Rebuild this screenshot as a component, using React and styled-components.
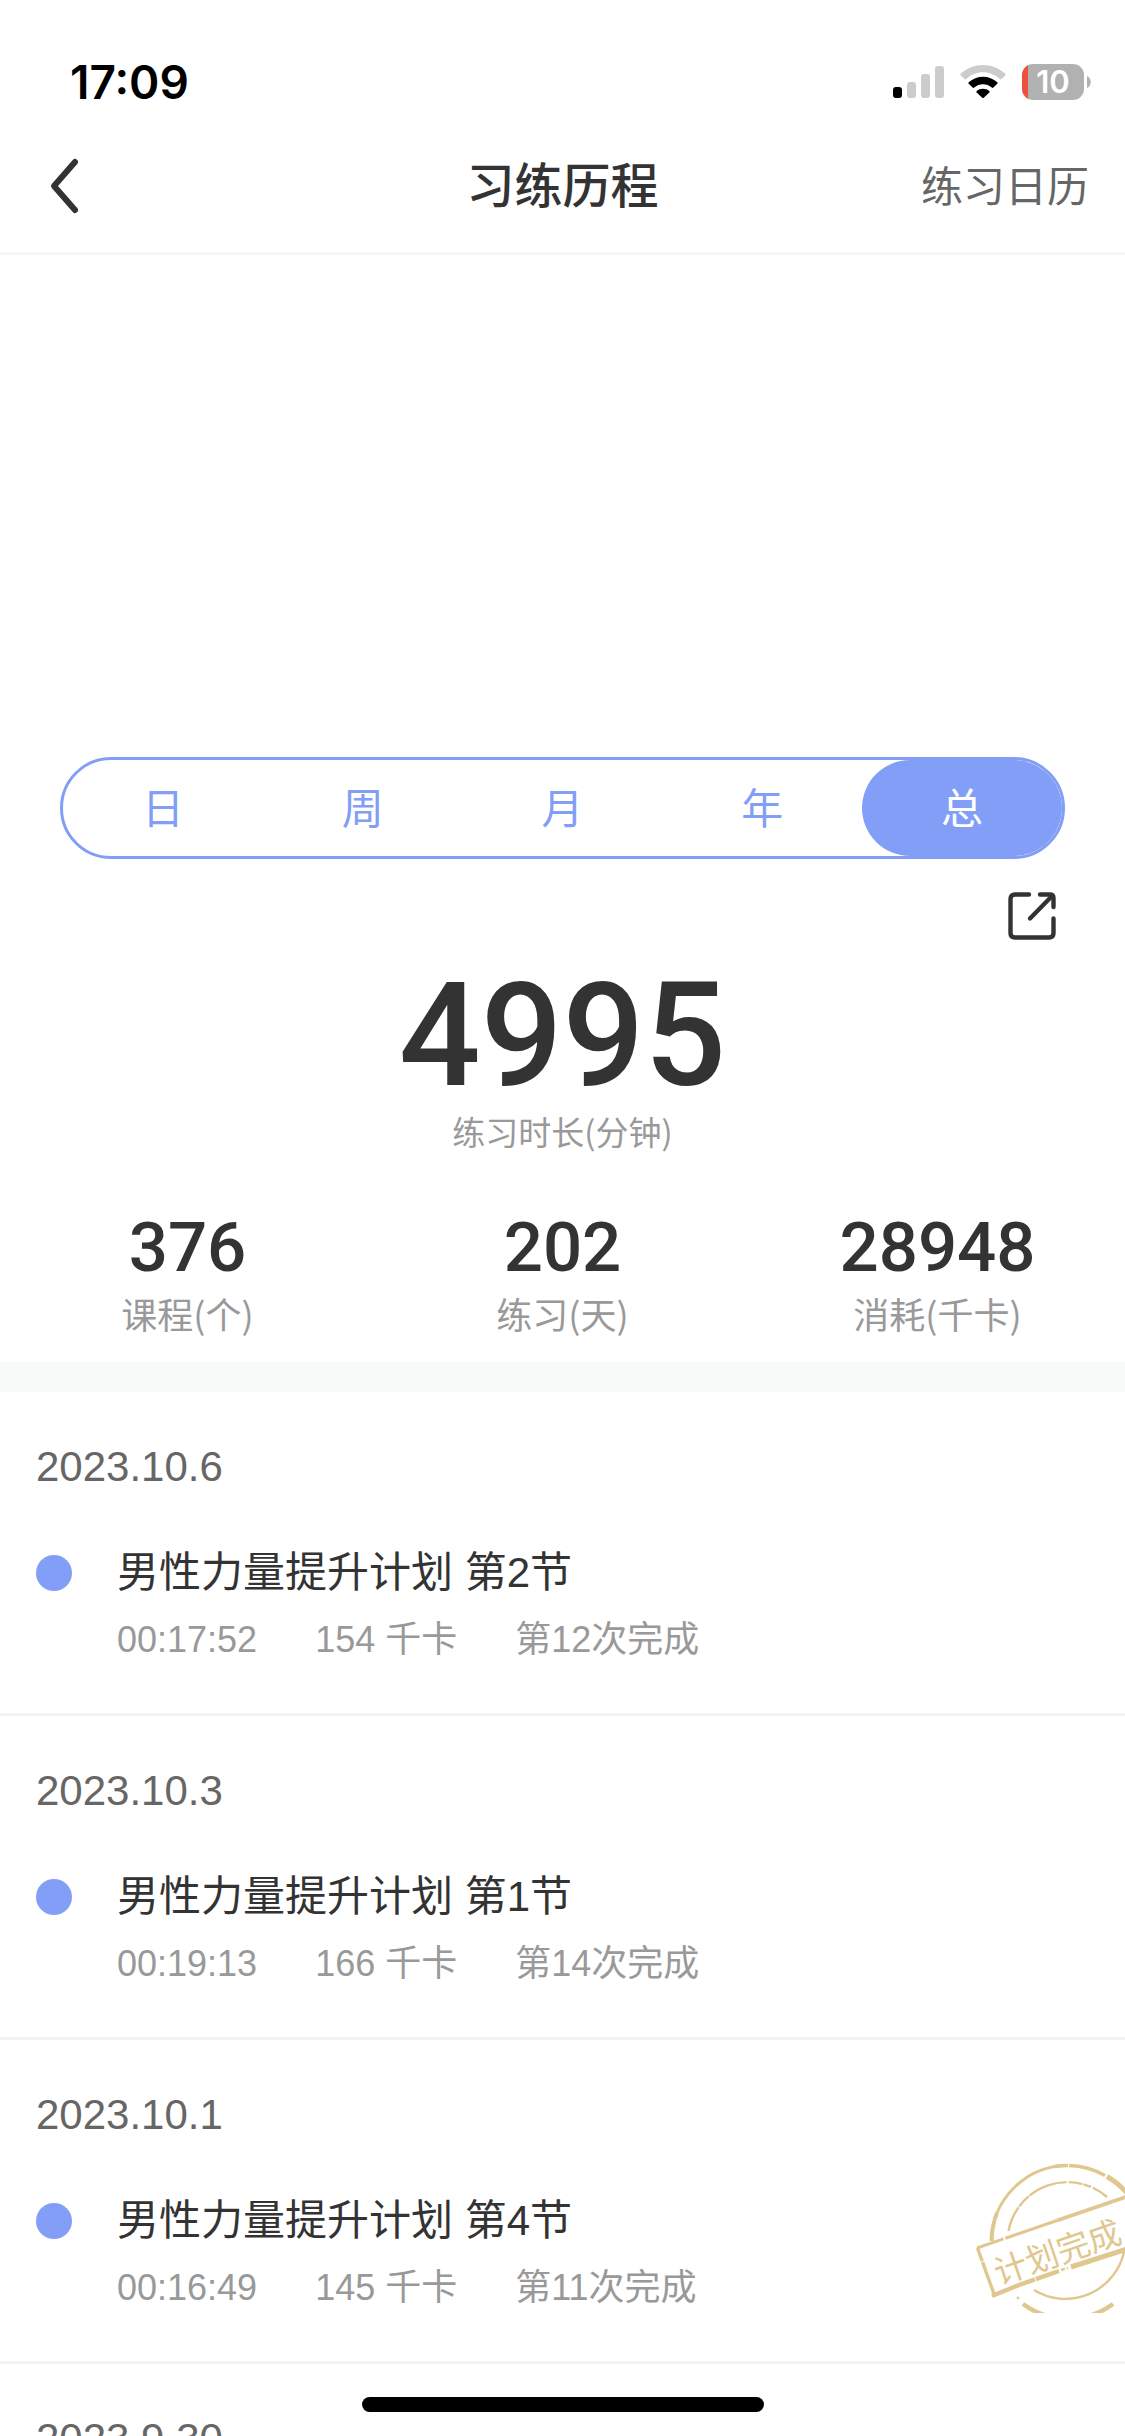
import React, { useState } from "react";
import styled, { createGlobalStyle } from "styled-components";

const BLUE = "#839ef6";
const CJK = '"Noto Sans CJK SC", sans-serif';

const GlobalStyle = createGlobalStyle`
  *, *::before, *::after { box-sizing: border-box; }
  body { margin: 0; background: #fff; overflow-x: hidden; }
  button { margin: 0; padding: 0; border: 0; background: none; font: inherit; color: inherit; cursor: pointer; }
  h1, h2, h3, p, ul, dl, dt, dd { margin: 0; padding: 0; font-weight: 400; }
  ul { list-style: none; }
`;

const Screen = styled.div`
  display: flex;
  flex-direction: column;
  height: 100vh;
  overflow: hidden;
  background: #fff;
  color: #333;
  font-family: "Liberation Sans", ${CJK};
`;

const StatusBar = styled.div`
  display: flex;
  flex: none;
  align-items: center;
  justify-content: space-between;
  height: 120px;
  padding: 44px 34px 0 70px;
`;

const Clock = styled.time`
  color: #000;
  font: 600 46px/60px Inter, sans-serif;
`;

const StatusIcons = styled.div`
  display: flex;
  align-items: center;
  gap: 16px;
`;

const NavBar = styled.header`
  display: grid;
  flex: none;
  grid-template-columns: 1fr auto 1fr;
  align-items: center;
  height: 135px;
  padding: 0 36px;
  border-bottom: 3px solid #f6f6f6;
  font-family: ${CJK};
`;

const BackButton = styled.button`
  && { padding-left: 12px; }
  display: flex;
  justify-self: start;
`;

const Title = styled.h1`
  && { padding-bottom: 8px; font-weight: 500; }
  font-size: 48px;
  line-height: 60px;
`;

const CalendarLink = styled.a`
  justify-self: end;
  padding-bottom: 4px;
  color: #666;
  font-size: 42px;
  font-weight: 400;
  line-height: 60px;
  text-decoration: none;
`;

const ChartSpace = styled.div`
  flex: none;
  height: 502px;
`;

const Tabs = styled.div`
  display: flex;
  flex: none;
  height: 102px;
  margin: 0 60px;
  border: 3px solid ${BLUE};
  border-radius: 51px;
`;

const Tab = styled.button`
  && {
    flex: 1;
    padding-bottom: 4px;
    border-radius: 48px;
    background: ${(p) => (p.$active ? BLUE : "transparent")};
    color: ${(p) => (p.$active ? "#fff" : BLUE)};
    font: 400 42px/60px ${CJK};
  }
`;

const ShareRow = styled.div`
  display: flex;
  flex: none;
  justify-content: flex-end;
  padding: 33px 69px 0 0;
`;

const ShareButton = styled.button`
  display: flex;
`;

const Metric = styled.dl`
  && { padding-top: ${(p) => (p.$large ? "36px" : "0")}; }
  display: flex;
  flex: ${(p) => (p.$large ? "none" : "1")};
  flex-direction: column-reverse;
  align-items: center;
`;

const MetricValue = styled.dd`
  && { font-weight: 500; }
  font-family: Roboto, sans-serif;
  font-size: ${(p) => (p.$large ? "144px" : "69px")};
  line-height: ${(p) => (p.$large ? "120px" : "60px")};
`;

const MetricLabel = styled.dt`
  && { margin-top: 10px; }
  color: #999;
  font-family: ${CJK};
  font-size: ${(p) => (p.$large ? "33px" : "36px")};
  line-height: 50px;
`;

const Stats = styled.div`
  display: flex;
  flex: none;
  padding: 62px 0 24px;
  border-bottom: 30px solid #f8fafa;
`;

const History = styled.ul`
  flex: 1;
  min-height: 0;
`;

const Entry = styled.li`
  position: relative;
  padding: 45px 36px 48px;
  border-bottom: 3px solid #f3f3f3;
`;

const EntryDate = styled.h2`
  color: #666;
  font-size: 42px;
  line-height: 60px;
`;

const EntryTitle = styled.h3`
  && { margin-top: 46px; }
  display: flex;
  align-items: center;
  gap: 45px;
  font-size: 42px;
  line-height: 60px;

  &::before {
    content: "";
    width: 36px;
    height: 36px;
    border-radius: 50%;
    background: ${BLUE};
  }
`;

const EntryFacts = styled.p`
  && { margin-top: 12px; padding-left: 81px; }
  display: flex;
  gap: 58px;
  color: #999;
  font-size: 36px;
  line-height: 50px;
`;

const StampBadge = styled.div`
  position: absolute;
  right: 0;
  bottom: 48px;
  display: flex;
`;

const HomeIndicator = styled.div`
  position: fixed;
  bottom: 24px;
  left: 50%;
  width: 402px;
  height: 15px;
  border-radius: 8px;
  background: #000;
  transform: translateX(-50%);
`;

const BatteryBox = styled.div`
  display: flex;
  align-items: center;
  gap: 3px;
`;

const BatteryBody = styled.div`
  width: 62px;
  height: 36px;
  border-radius: 11px;
  background: linear-gradient(90deg, #ee4f3e 6px, #b1b1b1 6px);
  color: #fff;
  font: 600 31px/36px Inter, sans-serif;
  text-align: center;
`;

function SignalIcon() {
  return (
    <svg width="51" height="36" viewBox="0 0 51 36">
      <rect x="0" y="23" width="9" height="11" rx="3" fill="#000" />
      <rect x="14" y="18" width="9" height="16" rx="3" fill="#ccc" />
      <rect x="28" y="10" width="9" height="24" rx="3" fill="#ccc" />
      <rect x="42" y="2" width="9" height="32" rx="3" fill="#ccc" />
    </svg>
  );
}

function WifiIcon() {
  return (
    <svg width="46" height="36" viewBox="0 0 46 36">
      <path d="M0.8 9.6C13 -2 33 -2 45.2 9.6Q46 10.5 45.2 11.4L41.5 15Q40.7 15.8 39.8 15C30.500 6 15.500 6 6.200 15Q5.300 15.800 4.500 15L0.800 11.400Q0 10.500 0.800 9.600Z" fill="#ccc" />
      <path d="M8.7 18.3C16.5 10.8 29.5 10.8 37.3 18.3Q38 19 37.3 19.8L33.4 23.6Q32.6 24.3 31.8 23.6C27 19 19 19 14.200 23.600Q13.400 24.300 12.600 23.600L8.700 19.800Q8 19 8.700 18.300Z" fill="#000" />
      <path d="M16.7 27C20 24 26 24 29.3 27Q30 27.7 29.3 28.4L23.8 33.7Q23 34.4 22.2 33.7L16.700 28.400Q16 27.700 16.700 27Z" fill="#000" />
    </svg>
  );
}

function Battery() {
  return (
    <BatteryBox>
      <BatteryBody>10</BatteryBody>
      <svg width="4" height="14" viewBox="0 0 4 14">
        <path d="M0 1C5 3 5 11 0 13Z" fill="#b1b1b1" />
      </svg>
    </BatteryBox>
  );
}

function BackIcon() {
  return (
    <svg width="34" height="60" viewBox="0 0 34 60" fill="none" stroke="#333" strokeWidth="6" strokeLinecap="round" strokeLinejoin="round">
      <path d="M27 6L6 30L27 54" />
    </svg>
  );
}

function ShareIcon() {
  return (
    <svg width="48" height="48" viewBox="0 0 48 48" fill="none" stroke="#333" strokeWidth="4.4" strokeLinecap="round" strokeLinejoin="round">
      <path d="M21 2.500H7Q2.500 2.500 2.500 7V41Q2.500 45.500 7 45.500H41Q45.500 45.500 45.500 41V26.500" />
      <path d="M32 2.500H42Q45.500 2.500 45.500 6V15" />
      <path d="M44 4L22 26.500" />
    </svg>
  );
}

function Stamp() {
  return (
    <svg width="150" height="150" viewBox="0 0 150 150" fill="none" stroke="#e0c78f">
      <path d="M16.500 78A76.500 76.500 0 0 1 91 2.500" strokeWidth="3" />
      <path d="M16.500 78A76.500 76.500 0 0 1 22 50" strokeWidth="4" strokeDasharray="20 1 8 1" />
      <path d="M79 3.500A76.500 76.500 0 0 1 130 12.500" strokeWidth="3.500" strokeDasharray="14 1 40" />
      <path d="M132 13.500A76.500 76.500 0 0 1 152 30" strokeWidth="5" />
      <path d="M48 141A76.500 76.500 0 0 0 138 141" strokeWidth="4.500" />
      <path d="M42 134L44 136" strokeWidth="2" />
      <path d="M33.500 68A60 60 0 0 1 132 34" strokeWidth="2.400" strokeDasharray="26 1 14 1 40 2 14 1 8 2" />
      <path d="M59 127A60 60 0 0 0 149 89" strokeWidth="2.400" />
      <path d="M2 85L82 57.500" strokeWidth="3" strokeDasharray="28 2 60" />
      <path d="M82 57.500L152 33.500" strokeWidth="3.800" />
      <path d="M2.500 85L19 131" strokeWidth="3.400" strokeDasharray="14 1 40" />
      <path d="M17 133L44 122L84 108" strokeWidth="4.500" strokeDasharray="46 1 60" />
      <path d="M86 107L93 105" strokeWidth="2.500" strokeDasharray="4 2" />
      <path d="M96 104L152 86" strokeWidth="5" />
      <text x="24" y="122" transform="rotate(-19 24 122)" fill="#e0c78f" stroke="none" fontFamily='"Noto Sans CJK SC", sans-serif' fontSize="33">
        计划完成
      </text>
    </svg>
  );
}

const PERIODS = ["日", "周", "月", "年", "总"];

const STATS = [
  { value: "376", label: "课程(个)" },
  { value: "202", label: "练习(天)" },
  { value: "28948", label: "消耗(千卡)" },
];

const ENTRIES = [
  { date: "2023.10.6", title: "男性力量提升计划 第2节", facts: ["00:17:52", "154 千卡", "第12次完成"] },
  { date: "2023.10.3", title: "男性力量提升计划 第1节", facts: ["00:19:13", "166 千卡", "第14次完成"] },
  { date: "2023.10.1", title: "男性力量提升计划 第4节", facts: ["00:16:49", "145 千卡", "第11次完成"], finished: true },
  { date: "2023.9.30" },
];

export default function App() {
  const [period, setPeriod] = useState("总");
  return (
    <Screen>
      <GlobalStyle />
      <StatusBar>
        <Clock>17:09</Clock>
        <StatusIcons>
          <SignalIcon />
          <WifiIcon />
          <Battery />
        </StatusIcons>
      </StatusBar>
      <NavBar>
        <BackButton type="button" aria-label="返回">
          <BackIcon />
        </BackButton>
        <Title>习练历程</Title>
        <CalendarLink href="#calendar">练习日历</CalendarLink>
      </NavBar>
      <ChartSpace />
      <Tabs role="tablist">
        {PERIODS.map((name) => (
          <Tab
            key={name}
            type="button"
            role="tab"
            aria-selected={period === name}
            $active={period === name}
            onClick={() => setPeriod(name)}
          >
            {name}
          </Tab>
        ))}
      </Tabs>
      <ShareRow>
        <ShareButton type="button" aria-label="分享">
          <ShareIcon />
        </ShareButton>
      </ShareRow>
      <Metric $large>
        <MetricLabel $large>练习时长(分钟)</MetricLabel>
        <MetricValue $large>4995</MetricValue>
      </Metric>
      <Stats>
        {STATS.map((s) => (
          <Metric key={s.label}>
            <MetricLabel>{s.label}</MetricLabel>
            <MetricValue>{s.value}</MetricValue>
          </Metric>
        ))}
      </Stats>
      <History>
        {ENTRIES.map((e) => (
          <Entry key={e.date}>
            <EntryDate>{e.date}</EntryDate>
            {e.title && <EntryTitle>{e.title}</EntryTitle>}
            {e.facts && (
              <EntryFacts>
                {e.facts.map((f) => (
                  <span key={f}>{f}</span>
                ))}
              </EntryFacts>
            )}
            {e.finished && (
              <StampBadge>
                <Stamp />
              </StampBadge>
            )}
          </Entry>
        ))}
      </History>
      <HomeIndicator />
    </Screen>
  );
}
